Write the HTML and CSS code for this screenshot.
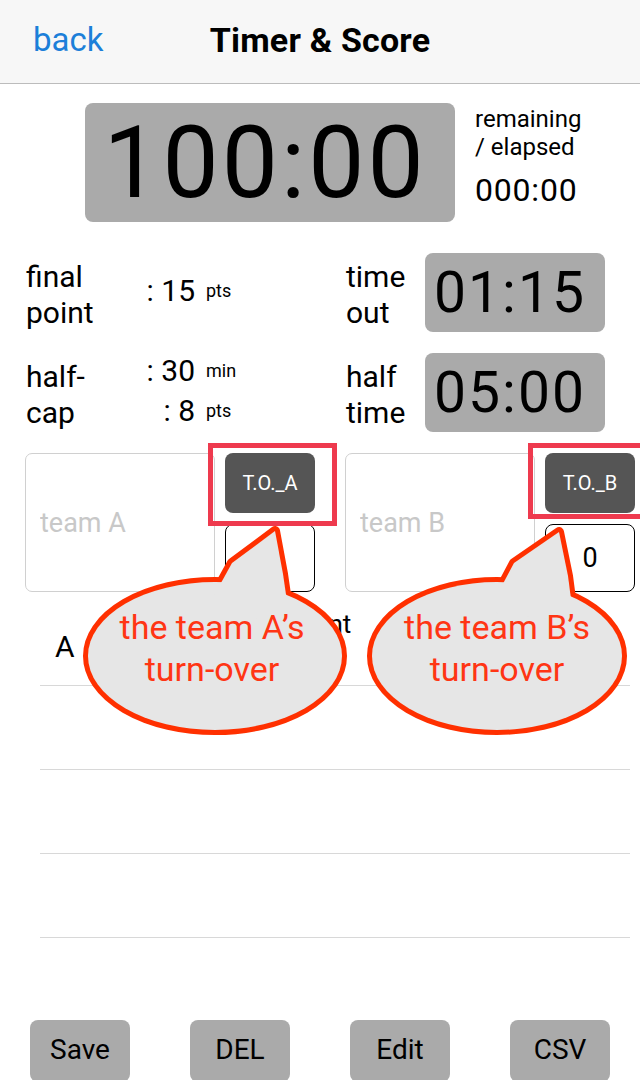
FILE: index.html
```html
<!DOCTYPE html>
<html lang="en">
<head>
    <meta charset="UTF-8">
    <meta name="viewport" content="width=device-width, initial-scale=1.0">
    <title>Timer &amp; Score</title>
    <link rel="stylesheet" href="styles.css">
</head>
<body>
    <div class="screen">
        <header class="nav">
            <a class="nav-back" href="#">back</a>
            <h1 class="nav-title">Timer &amp; Score</h1>
            <span></span>
        </header>

        <section class="timer">
            <div class="timer-box">100:00</div>
            <div class="timer-side">
                <div class="timer-mode">remaining<br>/ elapsed</div>
                <div class="timer-elapsed">000:00</div>
            </div>
        </section>

        <section class="settings">
            <div class="set-label">final<br>point</div>
            <div class="set-values">
                <div class="set-val"><span class="num">: 15</span><span class="unit">pts</span></div>
            </div>
            <div class="set-label">time<br>out</div>
            <div class="clock-box">01:15</div>

            <div class="set-label">half-<br>cap</div>
            <div class="set-values">
                <div class="set-val"><span class="num">: 30</span><span class="unit">min</span></div>
                <div class="set-val"><span class="num">: 8</span><span class="unit">pts</span></div>
            </div>
            <div class="set-label">half<br>time</div>
            <div class="clock-box">05:00</div>
        </section>

        <section class="teams">
            <div class="team">
                <input class="team-name" type="text" placeholder="team A">
                <div class="team-side">
                    <button class="to-btn">T.O._A</button>
                    <div class="score-box">0</div>
                </div>
            </div>
            <div class="team">
                <input class="team-name" type="text" placeholder="team B">
                <div class="team-side">
                    <button class="to-btn">T.O._B</button>
                    <div class="score-box">0</div>
                </div>
            </div>
        </section>

        <section class="log">
            <div class="log-head">
                <span class="log-a">A</span>
                <span class="log-point">Point</span>
            </div>
            <div class="log-row"></div>
            <div class="log-row"></div>
            <div class="log-row"></div>
        </section>

        <footer class="actions">
            <button class="act-btn">Save</button>
            <button class="act-btn">DEL</button>
            <button class="act-btn">Edit</button>
            <button class="act-btn">CSV</button>
        </footer>

        <!-- help callouts drawn over the turn-over buttons -->
        <svg class="callouts" width="640" height="1080" viewBox="0 0 640 1080">
            <rect class="mark" x="210.5" y="445.5" width="124" height="78"/>
            <rect class="mark" x="530.5" y="445.5" width="130" height="71"/>

            <g class="bubble-edge">
                <ellipse cx="215" cy="656" rx="127" ry="74"/>
                <polygon points="205,612 232,563 275,531 283,574 290,622"/>
                <ellipse cx="497" cy="656" rx="125" ry="74"/>
                <polygon points="488,612 514,563 559,532 568,576 574,622"/>
            </g>
            <g class="bubble-fill">
                <ellipse cx="215" cy="656" rx="127" ry="74"/>
                <polygon points="205,612 232,563 275,531 283,574 290,622"/>
                <ellipse cx="497" cy="656" rx="125" ry="74"/>
                <polygon points="488,612 514,563 559,532 568,576 574,622"/>
            </g>
            <text class="bubble-text" x="212" y="639">the team A’s</text>
            <text class="bubble-text" x="212" y="681">turn-over</text>
            <text class="bubble-text" x="497" y="639">the team B’s</text>
            <text class="bubble-text" x="497" y="681">turn-over</text>
        </svg>
    </div>
</body>
</html>
```

FILE: styles.css
```css
body {
    margin: 0;
    padding: 0;
    background-color: #fff;
    font-family: Roboto, "Liberation Sans", sans-serif;
    color: #000;
}

.screen {
    position: relative;
    width: 640px;
    height: 1080px;
    overflow: hidden;
}

/* navigation bar */
.nav {
    display: grid;
    grid-template-columns: 1fr auto 1fr;
    align-items: center;
    height: 83px;
    background-color: #f7f7f7;
    border-bottom: 1px solid #bcbcbc;
}

.nav-back {
    padding-left: 33px;
    font-size: 33px;
    color: #1c7fd9;
    text-decoration: none;
    padding-bottom: 4px;
}

.nav-title {
    margin: 0;
    font-size: 34px;
    font-weight: bold;
    letter-spacing: 0.2px;
    padding-bottom: 4px;
}

/* main clock */
.timer {
    display: flex;
    align-items: flex-start;
    padding: 19px 0 0 85px;
}

.timer-box {
    box-sizing: border-box;
    width: 370px;
    height: 119px;
    padding-right: 10px;
    background-color: #aaa;
    border-radius: 8px;
    font-size: 100px;
    line-height: 119px;
    text-align: center;
    letter-spacing: 3px;
}

.timer-side {
    margin-left: 20px;
    padding-top: 2px;
}

.timer-mode {
    font-size: 24px;
    line-height: 28px;
}

.timer-elapsed {
    margin-top: 11px;
    font-size: 32px;
    line-height: 36px;
    letter-spacing: 0.8px;
}

/* game settings */
.settings {
    display: grid;
    grid-template-columns: 111px 209px 79px 180px;
    grid-auto-rows: 79px;
    row-gap: 21px;
    align-items: center;
    margin-top: 31px;
    padding-left: 26px;
}

.set-label {
    font-size: 30px;
    line-height: 36px;
    padding-top: 4px;
}

.set-val {
    display: flex;
    align-items: baseline;
    line-height: 36px;
}

.num {
    width: 58px;
    text-align: right;
    font-size: 30px;
}

.unit {
    margin-left: 11px;
    font-size: 18px;
    position: relative;
    top: -4px;
}

.clock-box {
    box-sizing: border-box;
    height: 79px;
    padding-right: 10px;
    background-color: #aaa;
    border-radius: 8px;
    font-size: 57px;
    line-height: 79px;
    letter-spacing: 2px;
    text-align: center;
}

/* team cards */
.teams {
    display: flex;
    gap: 30px;
    margin-top: 21px;
    padding-left: 25px;
}

.team {
    display: flex;
    gap: 10px;
}

.team-name {
    box-sizing: border-box;
    width: 190px;
    height: 139px;
    margin: 0;
    padding: 0 0 0 14px;
    border: 1px solid #d0d0d0;
    border-radius: 7px;
    font-family: inherit;
    font-size: 27px;
    outline: none;
}

.team-name::placeholder {
    color: #c8c8c8;
}

.team-side {
    display: flex;
    flex-direction: column;
    gap: 11px;
    width: 90px;
}

.to-btn {
    height: 60px;
    padding: 0;
    border: none;
    border-radius: 8px;
    background-color: #555;
    color: #fff;
    font-family: inherit;
    font-size: 20px;
}

.score-box {
    box-sizing: border-box;
    height: 68px;
    border: 1.5px solid #000;
    border-radius: 8px;
    font-size: 27px;
    line-height: 66px;
    text-align: center;
}

/* point log */
.log {
    margin: 0 10px 0 40px;
}

.log-head {
    position: relative;
    height: 93px;
    border-bottom: 1px solid #d8d8d8;
}

.log-a {
    position: absolute;
    left: 15px;
    top: 37px;
    font-size: 30px;
}

.log-point {
    position: absolute;
    left: 251px;
    top: 17px;
    font-size: 26px;
}

.log-row {
    height: 83px;
    border-bottom: 1px solid #d8d8d8;
}

/* bottom buttons */
.actions {
    display: flex;
    gap: 60px;
    margin-top: 82px;
    padding-left: 30px;
}

.act-btn {
    width: 100px;
    height: 62px;
    padding: 0 0 4px;
    border: none;
    border-radius: 8px;
    background-color: #aaa;
    color: #000;
    font-family: inherit;
    font-size: 28px;
}

/* callouts */
.callouts {
    position: absolute;
    top: 0;
    left: 0;
    pointer-events: none;
}

.mark {
    fill: none;
    stroke: #ee3a4e;
    stroke-width: 5;
}

.bubble-edge {
    fill: #ff3000;
    stroke: #ff3000;
    stroke-width: 10;
    stroke-linejoin: round;
}

.bubble-fill {
    fill: #e6e6e6;
}

.bubble-text {
    fill: #ff3514;
    font-family: Roboto, "Liberation Sans", sans-serif;
    font-size: 34px;
    text-anchor: middle;
}
```
